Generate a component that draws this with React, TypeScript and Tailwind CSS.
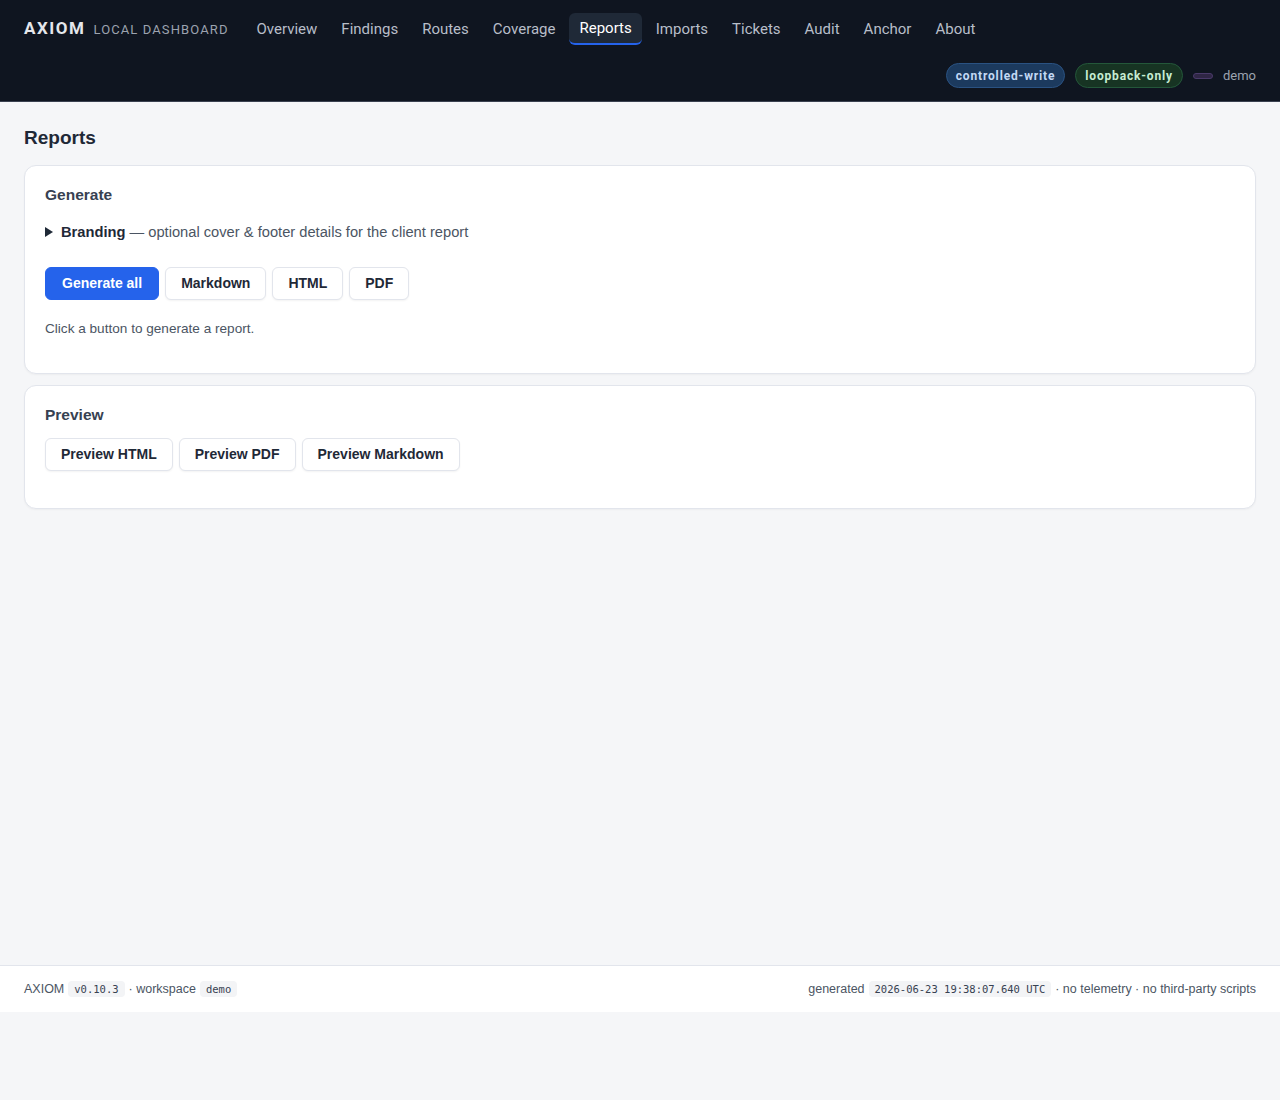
import React from "react";

const navItems = ["Overview", "Findings", "Routes", "Coverage", "Reports", "Imports", "Tickets", "Audit", "Anchor", "About"];

function Btn({ children, primary }: { children: React.ReactNode; primary?: boolean }) {
  return (
    <button
      className={
        primary
          ? "h-[33px] px-4 rounded-md bg-[#2563eb] border border-[#2563eb] text-white text-[14px] font-bold"
          : "h-[33px] px-[15px] rounded-md bg-white border border-[#e2e5ec] text-[#1f2937] text-[14px] font-bold shadow-[0_1px_2px_rgba(0,0,0,0.05)]"
      }
    >
      {children}
    </button>
  );
}

const codeCls =
  "ml-1 px-1.5 rounded bg-[#f3f4f6] text-[10.5px] leading-[16px] text-[#374151] font-['DejaVu_Sans_Mono',monospace]";

export default function App() {
  return (
    <div className="bg-[#f5f6f8] font-['Liberation_Sans',Arial,sans-serif]">
      <header className="bg-[#0f1520] border-b border-[#3a4150] px-6 pt-[13px] pb-[13px] font-['Roboto',sans-serif]">
        <div className="flex items-center h-8">
          <span className="text-[17px] font-bold tracking-[0.09em] text-[#e5e7eb]">AXIOM</span>
          <span className="ml-2 text-[13px] tracking-[0.085em] text-[#9ca3af] mt-[2px]">LOCAL DASHBOARD</span>
          <nav className="flex items-center gap-1 ml-[18px]">
            {navItems.map((n) =>
              n === "Reports" ? (
                <span
                  key={n}
                  className="h-8 flex items-center px-2.5 rounded-md bg-[#1f2937] border-b-2 border-[#2563eb] text-[15px] text-white"
                >
                  {n}
                </span>
              ) : (
                <span key={n} className="h-8 flex items-center px-2.5 text-[15px] text-[#b8bec9]">
                  {n}
                </span>
              )
            )}
          </nav>
        </div>
        <div className="flex items-center justify-end mt-[18px] h-[25px] gap-2.5">
          <span className="h-[25px] flex items-center px-[9px] rounded-full bg-[#1c3a5e] border border-[#2a5282] text-[12px] font-bold tracking-[0.07em] text-[#c3d9f5]">
            controlled-write
          </span>
          <span className="h-[25px] flex items-center px-[9px] rounded-full bg-[#173423] border border-[#24573a] text-[12px] font-bold tracking-[0.07em] text-[#c6ecd2]">
            loopback-only
          </span>
          <span className="w-5 h-[6px] rounded-full bg-[#2f2645] border border-[#4a3a6a]" />
          <span className="text-[13px] text-[#9ca3af]">demo</span>
        </div>
      </header>

      <main className="px-6 pt-[23px] min-h-[863px]">
        <h1 className="text-[19px] font-bold text-[#1f2937] leading-[26px]">Reports</h1>
        <section className="mt-[14px] bg-white border border-[#e2e5ec] rounded-xl shadow-[0_1px_2px_rgba(0,0,0,0.04)] px-5 pt-[20px] pb-[36px]">
          <h2 className="text-[15.5px] font-bold text-[#374151] leading-[18px]">Generate</h2>
          <div className="mt-[19px] flex items-center text-[14.7px] leading-[18px]">
            <span className="inline-block w-0 h-0 border-y-[5px] border-y-transparent border-l-[8px] border-l-[#1f2937] mr-2" />
            <b className="text-[#1f2937]">Branding</b>
            <span className="text-[#4b5563] ml-1">— optional cover &amp; footer details for the client report</span>
          </div>
          <div className="mt-[26px] flex gap-1.5">
            <Btn primary>Generate all</Btn>
            <Btn>Markdown</Btn>
            <Btn>HTML</Btn>
            <Btn>PDF</Btn>
          </div>
          <p className="mt-[21px] text-[13.6px] text-[#4b5563] leading-[16px]">Click a button to generate a report.</p>
        </section>
        <section className="mt-[11px] bg-white border border-[#e2e5ec] rounded-xl shadow-[0_1px_2px_rgba(0,0,0,0.04)] px-5 pt-[20px] pb-[37px]">
          <h2 className="text-[15.5px] font-bold text-[#374151] leading-[18px]">Preview</h2>
          <div className="mt-[14px] flex gap-1.5">
            <Btn>Preview HTML</Btn>
            <Btn>Preview PDF</Btn>
            <Btn>Preview Markdown</Btn>
          </div>
        </section>
      </main>

      <footer className="bg-white border-t border-[#e2e5ec] h-[47px] px-6 flex items-center justify-between text-[12.5px] text-[#4b5563]">
        <div className="flex items-center">
          AXIOM
          <code className={codeCls}>v0.10.3</code>
          <span className="ml-1">· workspace</span>
          <code className={codeCls}>demo</code>
        </div>
        <div className="flex items-center">
          generated
          <code className={codeCls}>2026-06-23 19:38:07.640 UTC</code>
          <span className="ml-1">· no telemetry · no third-party scripts</span>
        </div>
      </footer>
      <div className="h-[88px]" />
    </div>
  );
}
